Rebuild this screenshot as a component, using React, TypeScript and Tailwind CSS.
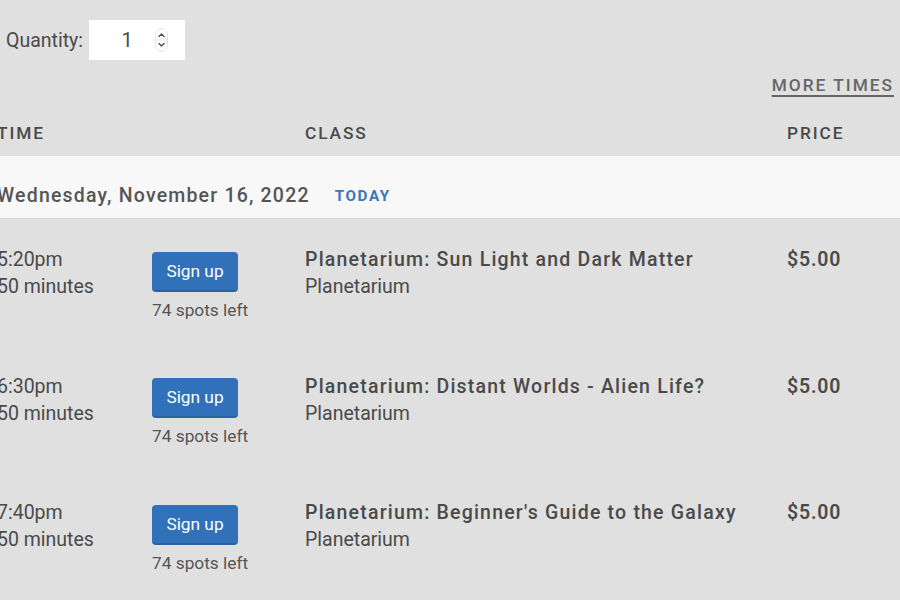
import React from "react";

const rows = [
  { time: "5:20pm", title: "Planetarium: Sun Light and Dark Matter" },
  { time: "6:30pm", title: "Planetarium: Distant Worlds - Alien Life?" },
  { time: "7:40pm", title: "Planetarium: Beginner's Guide to the Galaxy" },
];

function Spinner() {
  return (
    <svg width="13" height="24" viewBox="0 0 13 24" className="block">
      <rect x="0.5" y="0.5" width="12" height="23" rx="6" fill="#fff" stroke="#e4e4e4" />
      <line x1="1" y1="12" x2="12" y2="12" stroke="#e8e8e8" />
      <path d="M4 8.5 L6.5 6 L9 8.5" fill="none" stroke="#555" strokeWidth="1.5" strokeLinecap="round" strokeLinejoin="round" />
      <path d="M4 15.5 L6.5 18 L9 15.5" fill="none" stroke="#555" strokeWidth="1.5" strokeLinecap="round" strokeLinejoin="round" />
    </svg>
  );
}

export default function App() {
  return (
    <div
      className="w-[900px] h-[600px] overflow-hidden bg-[#e0e0e0] text-[#4a4a4a]"
      style={{ fontFamily: "Roboto, 'Open Sans', sans-serif" }}
    >
      <div className="flex items-center pl-[6px] pt-[20px] h-[60px]">
        <span className="text-[19.5px] text-[#4a4a4a] mt-[1px]">Quantity:</span>
        <div className="ml-[6px] w-[96px] h-[40px] bg-white flex items-center">
          <span className="w-[66px] text-center text-[20px] text-[#4a4a4a] pl-[10px]">1</span>
          <Spinner />
        </div>
      </div>
      <div className="flex justify-end pr-[6px] mt-[14px] h-[24px] items-center">
        <span className="text-[17.3px] font-medium tracking-[2px] text-[#666] underline underline-offset-[4px] decoration-[1.5px]">
          MORE TIMES
        </span>
      </div>
      <div className="ml-[-3px] grid grid-cols-[155px_153px_482px_1fr] h-[58px] pt-[14px] items-center text-[17.3px] font-medium tracking-[1.9px] text-[#4a4a4a]">
        <span>TIME</span>
        <span></span>
        <span>CLASS</span>
        <span>PRICE</span>
      </div>
      <div className="bg-[#f8f8f8] h-[63px] flex items-center pt-[17px] ml-[-3px] border-b border-[#d8d8d8]">
        <span className="text-[19.5px] font-medium tracking-[1.2px] text-[#555]">
          Wednesday, November 16, 2022
        </span>
        <span className="ml-[25px] text-[15.2px] font-bold tracking-[1.6px] text-[#3a76bd] mt-[2px]">
          TODAY
        </span>
      </div>
      {rows.map((r, i) => (
        <div
          key={i}
          className="ml-[-3px] grid grid-cols-[155px_153px_482px_1fr] h-[126.5px] pt-[27px]"
        >
          <div className="text-[19.5px] leading-[27px] text-[#4a4a4a]">
            <div>{r.time}</div>
            <div>50 minutes</div>
          </div>
          <div className="flex flex-col items-start pt-[5.5px]">
            <button className="w-[86px] h-[40px] rounded-[4px] bg-[#3171b9] text-white text-[17.3px] pt-[2px] border-b-2 border-[#2a62a3]">
              Sign up
            </button>
            <span className="mt-[6px] text-[17.3px] leading-[24px] text-[#555]">74 spots left</span>
          </div>
          <div className="leading-[27px]">
            <div className="text-[19.5px] font-medium tracking-[1.2px] text-[#4a4a4a]">{r.title}</div>
            <div className="text-[19.5px] text-[#4a4a4a]">Planetarium</div>
          </div>
          <div className="text-[19.5px] leading-[27px] font-semibold tracking-[0.8px] text-[#4a4a4a]">
            $5.00
          </div>
        </div>
      ))}
    </div>
  );
}
